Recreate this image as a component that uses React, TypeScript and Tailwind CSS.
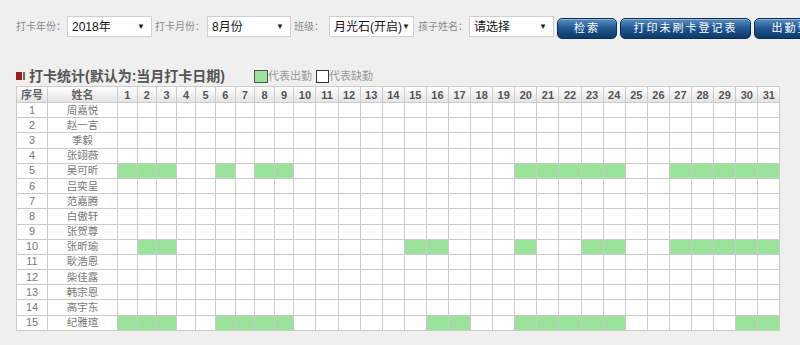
const names = [
  "周嘉悦", "赵一言", "季毅", "张翊薇", "吴可昕",
  "吕奕呈", "范嘉腾", "白傲轩", "张贺尊", "张昕瑜",
  "耿浩恩", "柴佳露", "韩宗恩", "高宇东", "纪雅瑄",
];

const present: Record<number, number[]> = {
  5: [1, 2, 3, 6, 8, 9, 20, 21, 22, 23, 24, 27, 28, 29, 30, 31],
  10: [2, 3, 15, 16, 20, 23, 24, 27, 28, 29, 30, 31],
  15: [1, 2, 3, 6, 7, 8, 9, 16, 17, 20, 21, 22, 23, 24, 30, 31],
};

const days = Array.from({ length: 31 }, (_, i) => i + 1);

const Select = ({ value, width }: { value: string; width: string }) => (
  <div className={`flex shrink-0 items-center justify-between h-[21px] ${width} bg-white border border-[#cfcfcf] pl-[4px] pr-[6px] text-[12px] text-[#111]`}>
    <span>{value}</span>
    <span className="text-[8px] text-[#222]">▼</span>
  </div>
);

const Button = ({ label, width }: { label: string; width: string }) => (
  <button className={`mt-[2px] h-[21px] ${width} shrink-0 rounded-[5px] border border-[#0b2f57] bg-gradient-to-b from-[#5b8fc2] via-[#1f5590] to-[#0d3a6a] text-white text-[11px] tracking-[2px] shadow-[inset_0_1px_0_rgba(255,255,255,0.35)]`}>
    {label}
  </button>
);

export default function App() {
  return (
    <div
      className="w-[800px] h-[345px] overflow-hidden bg-[#efefef]"
      style={{ fontFamily: '"Liberation Sans", "Noto Sans CJK SC", sans-serif' }}
    >
      <div className="flex items-start pt-[16px] pl-[16px] whitespace-nowrap">
        <span className="shrink-0 w-[51px] text-[10px] leading-[21px] text-[#8a8a8a]">打卡年份：</span>
        <Select value="2018年" width="w-[85px]" />
        <span className="shrink-0 ml-[3px] w-[52px] text-[10px] leading-[21px] text-[#8a8a8a]">打卡月份：</span>
        <Select value="8月份" width="w-[84px]" />
        <span className="shrink-0 ml-[3px] w-[35px] text-[10px] leading-[21px] text-[#8a8a8a]">班级：</span>
        <Select value="月光石(开启)" width="w-[85px]" />
        <span className="shrink-0 ml-[4px] w-[51px] text-[10px] leading-[21px] text-[#8a8a8a]">孩子姓名：</span>
        <Select value="请选择" width="w-[85px]" />
        <div className="shrink-0 ml-[3px] flex gap-[3px]">
          <Button label="检索" width="w-[60px]" />
          <Button label="打印未刷卡登记表" width="w-[131px]" />
          <Button label="出勤登记表" width="w-[100px]" />
        </div>
      </div>

      <div className="flex items-end h-[20px] mt-[27px] pl-[16px]">
        <div className="flex items-center h-[20px]">
          <span className="w-[6px] h-[8px] bg-[#9b1c1c]" />
          <span className="ml-[1px] w-[2px] h-[8px] bg-[#6b6b6b]" />
          <span className="ml-[4px] text-[14px] font-bold text-[#555] leading-[20px]">打卡统计(默认为:当月打卡日期)</span>
        </div>
        <div className="ml-[29px] flex items-center h-[20px] text-[11px] text-[#9a9a9a]">
          <span className="w-[14px] h-[13px] bg-[#99e39b] border border-[#555]" />
          <span>代表出勤</span>
          <span className="ml-[4px] w-[13px] h-[13px] bg-white border border-[#333]" />
          <span>代表缺勤</span>
        </div>
      </div>

      <table className="ml-[16px] table-fixed w-[764px] border-collapse text-[11px] text-[#777]">
        <colgroup>
          <col className="w-[31px]" />
          <col className="w-[70px]" />
          {days.map((d) => (
            <col key={d} className={d < 10 ? "w-[19.6px]" : "w-[22.1px]"} />
          ))}
        </colgroup>
        <thead>
          <tr className="h-[16px] bg-gradient-to-b from-white to-[#e2e2e2]">
            <th className="border border-[#cbcbcb] p-0 font-bold text-[#666] leading-[14px]">序号</th>
            <th className="border border-[#cbcbcb] p-0 font-bold text-[#666] leading-[14px]">姓名</th>
            {days.map((d) => (
              <th key={d} className="border border-[#cbcbcb] p-0 font-bold text-[#555] leading-[14px]">
                {d}
              </th>
            ))}
          </tr>
        </thead>
        <tbody>
          {names.map((name, i) => {
            const row = i + 1;
            const on = present[row] ?? [];
            return (
              <tr key={row} className="h-[15.2px] bg-white">
                <td className="border border-[#cbcbcb] p-0 text-center leading-[13px]">{row}</td>
                <td className="border border-[#cbcbcb] p-0 text-center leading-[13px] text-[10.5px]">{name}</td>
                {days.map((d) => (
                  <td
                    key={d}
                    className={`border border-[#cbcbcb] p-0 ${on.includes(d) ? "bg-[#99e39b]" : ""}`}
                  />
                ))}
              </tr>
            );
          })}
        </tbody>
      </table>
    </div>
  );
}
